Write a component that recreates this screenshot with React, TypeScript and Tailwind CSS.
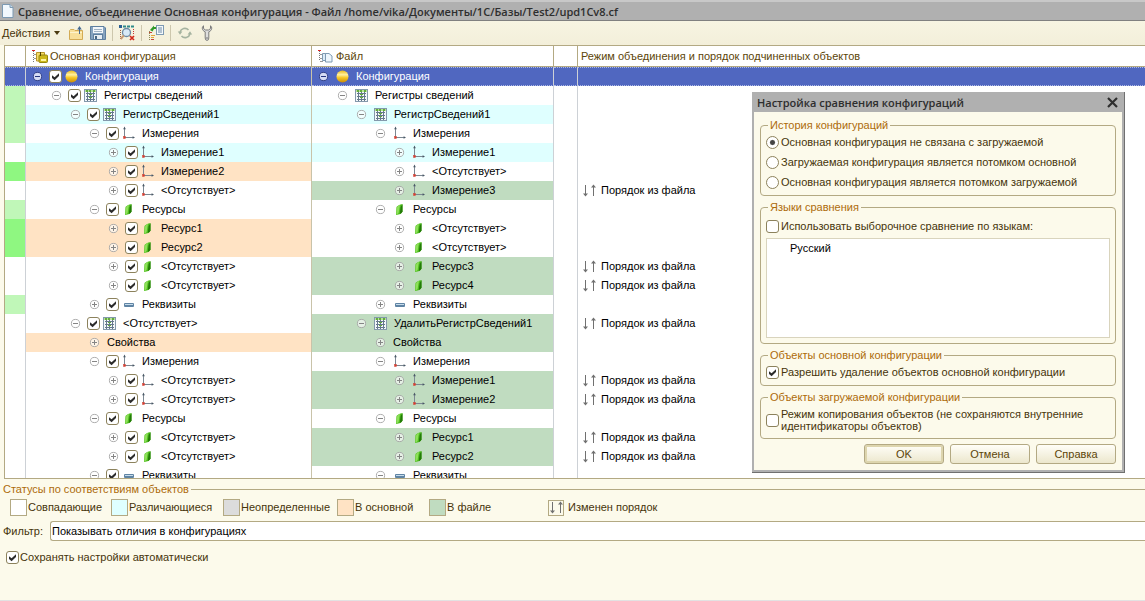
import { useState } from 'react'
import type { ReactNode } from 'react'

type IconKind = 'config' | 'register' | 'axes' | 'resource' | 'attribute' | 'none'
type Tone = 'plain' | 'diff' | 'main' | 'file'

interface Side {
  text: string
  tone: Tone
}

interface Row {
  level: number
  icon: IconKind
  open: boolean
  left: Side
  right: Side
  mark?: 'light' | 'strong'
  order?: boolean
}

const row = (
  level: number,
  icon: IconKind,
  open: boolean,
  left: string,
  leftTone: Tone,
  right: string,
  rightTone: Tone,
  extra: Partial<Row> = {}
): Row => ({
  level,
  icon,
  open,
  left: { text: left, tone: leftTone },
  right: { text: right, tone: rightTone },
  ...extra,
})

const MISSING = '<Отсутствует>'

const rows: Row[] = [
  row(0, 'config', true, 'Конфигурация', 'plain', 'Конфигурация', 'plain'),
  row(1, 'register', true, 'Регистры сведений', 'plain', 'Регистры сведений', 'plain', { mark: 'light' }),
  row(2, 'register', true, 'РегистрСведений1', 'diff', 'РегистрСведений1', 'diff', { mark: 'light' }),
  row(3, 'axes', true, 'Измерения', 'plain', 'Измерения', 'plain', { mark: 'light' }),
  row(4, 'axes', false, 'Измерение1', 'diff', 'Измерение1', 'diff'),
  row(4, 'axes', false, 'Измерение2', 'main', MISSING, 'plain', { mark: 'strong' }),
  row(4, 'axes', false, MISSING, 'plain', 'Измерение3', 'file', { order: true }),
  row(3, 'resource', true, 'Ресурсы', 'plain', 'Ресурсы', 'plain', { mark: 'light' }),
  row(4, 'resource', false, 'Ресурс1', 'main', MISSING, 'plain', { mark: 'strong' }),
  row(4, 'resource', false, 'Ресурс2', 'main', MISSING, 'plain', { mark: 'strong' }),
  row(4, 'resource', false, MISSING, 'plain', 'Ресурс3', 'file', { order: true }),
  row(4, 'resource', false, MISSING, 'plain', 'Ресурс4', 'file', { order: true }),
  row(3, 'attribute', false, 'Реквизиты', 'plain', 'Реквизиты', 'plain', { mark: 'light' }),
  row(2, 'register', true, MISSING, 'plain', 'УдалитьРегистрСведений1', 'file', { order: true }),
  row(3, 'none', false, 'Свойства', 'main', 'Свойства', 'file'),
  row(3, 'axes', true, 'Измерения', 'plain', 'Измерения', 'plain'),
  row(4, 'axes', false, MISSING, 'plain', 'Измерение1', 'file', { order: true }),
  row(4, 'axes', false, MISSING, 'plain', 'Измерение2', 'file', { order: true }),
  row(3, 'resource', true, 'Ресурсы', 'plain', 'Ресурсы', 'plain'),
  row(4, 'resource', false, MISSING, 'plain', 'Ресурс1', 'file', { order: true }),
  row(4, 'resource', false, MISSING, 'plain', 'Ресурс2', 'file', { order: true }),
  row(3, 'attribute', true, 'Реквизиты', 'plain', 'Реквизиты', 'plain'),
]

const toneClass: Record<Tone, string> = {
  plain: '',
  diff: 'bg-[#dfffff]',
  main: 'bg-[#ffe3c4]',
  file: 'bg-[#c0dcc0]',
}

const markClass = {
  light: 'bg-[#c0f7b8]',
  strong: 'bg-[#8ff781]',
}

const levelPad = ['pl-[7px]', 'pl-[26px]', 'pl-[45px]', 'pl-[64px]', 'pl-[83px]']

const statuses = [
  { text: 'Совпадающие', color: 'bg-white' },
  { text: 'Различающиеся', color: 'bg-[#dfffff]' },
  { text: 'Неопределенные', color: 'bg-[#dcdcdc]' },
  { text: 'В основной', color: 'bg-[#ffe3c4]' },
  { text: 'В файле', color: 'bg-[#c0dcc0]' },
]

function CheckBox({ defaultChecked = false, label, id }: { defaultChecked?: boolean; label?: string; id?: string }) {
  return (
    <span className="grid size-[13px] shrink-0">
      <input
        id={id}
        type="checkbox"
        defaultChecked={defaultChecked}
        aria-label={label}
        className="peer col-start-1 row-start-1 size-[13px] appearance-none rounded-[3px] border border-[#8c825c] bg-white"
      />
      <svg
        viewBox="0 0 13 13"
        className="pointer-events-none invisible col-start-1 row-start-1 size-[13px] peer-checked:visible"
      >
        <path d="M3 5.2 L5.6 7.2 L10 3.2 V6 L5.6 10.3 L3 8 Z" fill="#2c2c2c" />
      </svg>
    </span>
  )
}

function Expander({ open, selected }: { open: boolean; selected: boolean }) {
  return (
    <button type="button" aria-label={open ? 'Свернуть' : 'Развернуть'} className="size-[9px] shrink-0">
      <svg viewBox="0 0 9 9" className="size-[9px] overflow-visible">
        <circle
          cx="4.5"
          cy="4.5"
          r="4.1"
          fill={selected ? '#d5dcf5' : '#fff'}
          fillOpacity={selected ? 1 : 0.6}
          stroke={selected ? '#2b3a80' : '#a4a4a4'}
          strokeWidth="0.9"
        />
        <path d={open ? 'M2 4.5 H7' : 'M2 4.5 H7 M4.5 2 V7'} stroke={selected ? '#25357f' : '#858585'} strokeWidth="1" />
      </svg>
    </button>
  )
}

function TreeIcon({ kind }: { kind: IconKind }) {
  if (kind === 'config') {
    return (
      <svg viewBox="0 0 13 13" className="size-[13px] shrink-0">
        <defs>
          <linearGradient id="ball" x1="0" y1="0" x2="0" y2="1">
            <stop offset="0" stopColor="#e8b818" />
            <stop offset="0.35" stopColor="#fff0a0" />
            <stop offset="0.6" stopColor="#f6c624" />
            <stop offset="1" stopColor="#c98a08" />
          </linearGradient>
        </defs>
        <circle cx="6.5" cy="6.5" r="6" fill="url(#ball)" />
      </svg>
    )
  }
  if (kind === 'register') {
    return (
      <svg viewBox="0 0 13 13" className="size-[13px] shrink-0">
        <rect x="0.5" y="0.5" width="12" height="12" fill="#f4f8fb" stroke="#8499ac" />
        <rect x="1" y="1" width="11" height="2" fill="#b9e29a" />
        <path d="M2 1 h2 v2 h-2z M5 1 h2 v2 h-2z M9 1 h2 v2 h-2z" fill="#62ab3c" />
        <path d="M3.5 3 V12 M6.5 3 V12 M9.5 3 V12" stroke="#66798c" strokeWidth="1" />
        <path d="M2 4.5 H11 M2 7.5 H11 M2 10.5 H11" stroke="#66798c" strokeWidth="1" />
        <path d="M5 5 h3 v1 h-3z M5 8 h3 v1 h-3z" fill="#62ab3c" />
      </svg>
    )
  }
  if (kind === 'axes') {
    return (
      <svg viewBox="0 0 13 13" className="size-[13px] shrink-0 overflow-visible">
        <path d="M2.5 1 V10.5 H12" stroke="#7b8792" fill="none" />
        <path d="M2.5 -0.5 L3.8 2.2 H1.2 Z M13 10.5 L10.6 9.2 V11.8 Z" fill="#4a5866" />
        <rect x="1.5" y="9.5" width="2" height="2" fill="#e2382a" stroke="#c9483c" strokeWidth="0.5" />
      </svg>
    )
  }
  if (kind === 'resource') {
    return (
      <svg viewBox="0 0 13 13" className="size-[13px] shrink-0">
        <path d="M3.5 4.5 Q5 1.5 9.5 1 V8.5 Q8.5 11.5 3 12 Z" fill="#4fbf1e" />
        <path d="M3.8 4.8 Q4.8 2.6 7 1.8 L5.6 10 Q4.5 11.2 3.4 11.6 Z" fill="#8ee05a" />
        <path d="M7.6 4 L6.8 11 Q9 10 9.5 8.5 V1.2 Z" fill="#237a08" />
      </svg>
    )
  }
  if (kind === 'attribute') {
    return (
      <svg viewBox="0 0 13 13" className="size-[13px] shrink-0">
        <rect x="2" y="5" width="10" height="4" rx="1" fill="#5f84a4" />
        <rect x="3" y="6" width="8" height="1" fill="#c6dcec" />
      </svg>
    )
  }
  return null
}

function OrderIcon() {
  return (
    <svg viewBox="0 0 13 13" className="size-[13px] shrink-0">
      <path d="M2.5 1 V12 M10.5 1 V12" stroke="#707070" />
      <path d="M0 9.5 H5 L2.5 12.5 Z M8 3.5 H13 L10.5 0.5 Z" fill="#707070" />
    </svg>
  )
}

function TreeCell({ row, side, selected, checkable }: { row: Row; side: Side; selected: boolean; checkable: boolean }) {
  const hasIcon = row.icon !== 'none'
  return (
    <div className={`flex items-center ${levelPad[row.level]}`}>
      <Expander open={row.open} selected={selected} />
      {checkable && hasIcon && (
        <span className="ml-[7px] mr-[-5px] flex">
          <CheckBox defaultChecked label={side.text} />
        </span>
      )}
      <span className="ml-2 flex items-center gap-[7px] whitespace-nowrap">
        {hasIcon && <TreeIcon kind={row.icon} />}
        {side.text}
      </span>
    </div>
  )
}

function ConfigTable() {
  const [current, setCurrent] = useState(0)
  const head = 'h-[21px] border-b border-r border-[#b3a983] p-0 text-left font-normal'

  return (
    <table className="w-full table-fixed border-separate border-spacing-0 text-black">
      <colgroup>
        <col className="w-[21px]" />
        <col className="w-[286px]" />
        <col className="w-[242px]" />
        <col className="w-6" />
        <col />
      </colgroup>
      <thead className="text-[#5c4508]">
        <tr>
          <th className={head} />
          <th className={head}>
            <span className="flex items-center gap-[2px] pl-[6px]">
              <svg viewBox="0 0 16 14" className="h-[14px] w-4">
                <path d="M1.5 2 V13" stroke="#777" strokeDasharray="1 1" />
                <path d="M2 5.5 H4 M2 9.5 H4" stroke="#999" />
                <path d="M0 1.5 H3" stroke="#d22" />
                <path d="M4.5 3.5 H12.5 V12 H4.5 Z" fill="#f3dc6a" stroke="#b8962a" />
                <rect x="7" y="6" width="8.5" height="7.5" rx="1" fill="#cdb91c" stroke="#978610" />
                <path d="M8.5 3 V7" stroke="#554400" />
                <rect x="9" y="10" width="5" height="2" fill="#fff4a0" />
              </svg>
              Основная конфигурация
            </span>
          </th>
          <th className={head}>
            <span className="flex items-center gap-[2px] pl-[6px]">
              <svg viewBox="0 0 16 14" className="h-[14px] w-4">
                <path d="M1.5 2 V12" stroke="#777" strokeDasharray="1 1" />
                <path d="M2 5.5 H5 M2 9.5 H5 M2 12.5 H5" stroke="#999" />
                <path d="M0 1.5 H3" stroke="#d22" />
                <path d="M4.5 4.5 H8 V11.5 H4.5 Z" fill="#dcecf8" stroke="#7f9bb3" />
                <path d="M7.5 4.5 H11 L14 7 V13 H7.5 Z" fill="#eef6fc" stroke="#7f9bb3" />
              </svg>
              Файл
            </span>
          </th>
          <th className={head} />
          <th className={`${head} border-r-0 pl-[3px]`}>Режим объединения и порядок подчиненных объектов</th>
        </tr>
      </thead>
      <tbody>
        {rows.map((r, i) => {
          const selected = i === current
          const cell = selected
            ? 'h-[19px] border-y border-y-[#aeb9e6] bg-[#5067c0] p-0 text-white [border-block-style:dotted]'
            : 'h-[19px] p-0'
          return (
            <tr key={i} onClick={() => setCurrent(i)}>
              <td className={`${cell} border-r border-r-[#cdd1d6] ${r.mark ? markClass[r.mark] : ''}`} />
              <td className={`${cell} border-r border-r-[#c9c3a9] ${toneClass[r.left.tone]}`}>
                <TreeCell row={r} side={r.left} selected={selected} checkable />
              </td>
              <td className={`${cell} border-r border-r-[#cdd1d6] ${toneClass[r.right.tone]}`}>
                <TreeCell row={r} side={r.right} selected={selected} checkable={false} />
              </td>
              <td className={`${cell} border-r border-r-[#cdd1d6]`} />
              <td className={cell}>
                {r.order && (
                  <span className="flex items-center gap-[5px] pl-[5px]">
                    <OrderIcon />
                    Порядок из файла
                  </span>
                )}
              </td>
            </tr>
          )
        })}
      </tbody>
    </table>
  )
}

function ToolButton({ label, children }: { label: string; children: ReactNode }) {
  return (
    <button type="button" aria-label={label} className="flex w-[22px] justify-center">
      <svg viewBox="0 0 16 16" className="size-4">
        {children}
      </svg>
    </button>
  )
}

function Separator() {
  return <span className="mx-[3px] h-4 w-px bg-[#cdc7ad]" />
}

function Toolbar() {
  return (
    <div className="flex h-6 items-center bg-linear-to-b from-[#f7f4e2] to-[#f3efda] pl-[2px]">
      <button type="button" className="mr-[5px] flex items-center gap-1">
        Действия
        <svg viewBox="0 0 6 4" className="h-1 w-[6px]">
          <path d="M0 0 H6 L3 4 Z" fill="#4a3a10" />
        </svg>
      </button>
      <ToolButton label="Открыть">
        <path d="M1.5 5.5 L2.5 4.5 H6 L7 5.5 H14.5 V14.5 H1.5 Z" fill="#f8e09a" stroke="#d3ab55" />
        <path d="M2 7.5 H14" stroke="#fdf3cc" />
        <path d="M11.5 9 V2" stroke="#44698f" />
        <path d="M9.2 4.5 L11.5 1 L13.8 4.5 Z" fill="#44698f" />
      </ToolButton>
      <ToolButton label="Сохранить">
        <path d="M0.5 1.5 H14 L15.5 3 V14.5 H0.5 Z" fill="#86a3bf" stroke="#5e7f9f" />
        <rect x="3" y="2" width="10" height="6" fill="#f2f6fa" />
        <path d="M4 4.5 H12 M4 6.5 H12" stroke="#9fb2c4" />
        <rect x="3.5" y="9.5" width="9" height="5" fill="#e6edf3" stroke="#5e7f9f" />
        <rect x="5" y="11" width="2" height="3" fill="#456583" />
      </ToolButton>
      <Separator />
      <ToolButton label="Сравнить">
        <path d="M4 1.5 H16" stroke="#2f8a8a" strokeWidth="2" strokeDasharray="3 1" />
        <path d="M1.5 5 V14" stroke="#a05a40" strokeDasharray="1 1" />
        <rect x="0" y="0" width="3" height="3" fill="#2b5f93" />
        <path d="M14.5 4 V9" stroke="#c33" strokeDasharray="1 1" />
        <circle cx="7.5" cy="7.5" r="4" fill="#d8e9f7" stroke="#6d89a3" strokeWidth="1.3" />
        <path d="M4.8 10.4 L1.8 14" stroke="#c99a72" strokeWidth="2" />
        <path d="M11 11 L15 15 M15 11 L11 15" stroke="#d22a1c" strokeWidth="1.7" />
      </ToolButton>
      <Separator />
      <ToolButton label="Отчет">
        <path d="M1.5 6 V16" stroke="#8d8a55" strokeDasharray="1 1" />
        <path d="M1 7.5 H4 M3 14.5 H6" stroke="#c4453a" />
        <path d="M3 10.5 H7 M3 12.5 H6" stroke="#e2a43a" />
        <path d="M2 5 L6 0.5 V2 H8.5 V4 H6 L4.5 6.5 Z" fill="#2f9a2a" />
        <rect x="8.5" y="0.5" width="7" height="9" fill="#f4f8fb" stroke="#7f9bb3" />
        <path d="M10 3 H14 M10 5 H14 M10 7 H14" stroke="#5d7f9d" strokeWidth="0.9" />
      </ToolButton>
      <Separator />
      <ToolButton label="Обновить">
        <path d="M3 7 A5 5 0 0 1 11.5 5" fill="none" stroke="#a5b3a0" strokeWidth="1.6" />
        <path d="M13 9 A5 5 0 0 1 4.5 11" fill="none" stroke="#a5b3a0" strokeWidth="1.6" />
        <path d="M0.8 6.5 H5.4 L3 9.8 Z M10.6 9.5 H15.2 L13 6.2 Z" fill="#a5b3a0" />
      </ToolButton>
      <ToolButton label="Настройка">
        <path
          d="M4.5 0.8 C2.6 2 2.8 5.6 6.2 6.8 V13 Q6.2 15.4 8 15.4 Q9.8 15.4 9.8 13 V6.8 C13.2 5.6 13.4 2 11.5 0.8 V3.6 L9.5 5 H6.5 L4.5 3.6 Z"
          fill="#dedede"
          stroke="#7c7c7c"
        />
        <circle cx="8" cy="13" r="0.8" fill="#666" />
      </ToolButton>
    </div>
  )
}

function Group({ title, className, children }: { title: string; className: string; children: ReactNode }) {
  return (
    <fieldset className={`rounded-[4px] border border-[#b3a983] px-[5px] ${className}`}>
      <legend className="ml-[2px] px-[2px] leading-3 text-[#ad6b0a]">{title}</legend>
      {children}
    </fieldset>
  )
}

const history = [
  'Основная конфигурация не связана с загружаемой',
  'Загружаемая конфигурация является потомком основной',
  'Основная конфигурация является потомком загружаемой',
]

const dialogButton =
  'h-5 w-20 rounded-[3px] border border-[#b3a983] bg-linear-to-b from-[#fffef8] to-[#ece7cd] text-[#5c4508]'

function SettingsDialog() {
  return (
    <div
      role="dialog"
      aria-labelledby="dialog-title"
      className="absolute right-5 top-[92px] w-[373px] border-b border-r border-[#707070] bg-[#fcfaeb]"
    >
      <div className="border-x-2 border-b-2 border-[#b0b0b0]">
        <div className="flex h-5 items-center justify-between bg-[#b0b0b0] pl-[3px] pr-1">
          <h2 id="dialog-title" className="font-['Open_Sans',sans-serif] text-[11px] font-semibold text-[#2e2e2e]">
            Настройка сравнения конфигураций
          </h2>
          <button type="button" aria-label="Закрыть">
            <svg viewBox="0 0 11 11" className="size-[11px]">
              <path d="M1 1 L10 10 M10 1 L1 10" stroke="#2e2e2e" strokeWidth="2.2" />
            </svg>
          </button>
        </div>
        <form className="flex flex-col gap-[5px] px-[6px] pb-[6px] pt-[7px]" onSubmit={(e) => e.preventDefault()}>
          <Group title="История конфигураций" className="pb-[3px] pt-px">
            {history.map((text, i) => (
              <label key={text} className="flex h-5 items-center gap-[2px]">
                <input
                  type="radio"
                  name="history"
                  defaultChecked={i === 0}
                  className="size-[13px] appearance-none rounded-full border border-[#8c825c] bg-white checked:bg-radial checked:from-[#444] checked:from-25% checked:to-white checked:to-40%"
                />
                {text}
              </label>
            ))}
          </Group>
          <Group title="Языки сравнения" className="pb-[5px]">
            <label className="mt-[3px] flex h-5 items-center gap-[2px]">
              <CheckBox />
              Использовать выборочное сравнение по языкам:
            </label>
            <ul className="mt-[2px] h-[100px] border border-[#d9d4bd] bg-white pl-[23px] pt-px text-black">
              <li className="leading-4">Русский</li>
            </ul>
          </Group>
          <Group title="Объекты основной конфигурации" className="pb-[3px]">
            <label className="mt-px flex h-5 items-center gap-[2px]">
              <CheckBox defaultChecked />
              Разрешить удаление объектов основной конфигурации
            </label>
          </Group>
          <Group title="Объекты загружаемой конфигурации" className="pb-[6px]">
            <label className="mt-[5px] flex items-center gap-[2px] leading-3">
              <CheckBox />
              Режим копирования объектов (не сохраняются внутренние идентификаторы объектов)
            </label>
          </Group>
          <div className="flex justify-end gap-[6px]">
            <button type="submit" className={`${dialogButton} inset-ring-2 inset-ring-[#ddd5ae]`}>
              OK
            </button>
            <button type="button" className={dialogButton}>
              Отмена
            </button>
            <button type="button" className={dialogButton}>
              Справка
            </button>
          </div>
        </form>
      </div>
    </div>
  )
}

export default function App() {
  return (
    <div className="relative flex h-screen flex-col overflow-hidden border-b border-[#e2e2e2] bg-[#fcfaeb] font-['Liberation_Sans',Arial,sans-serif] text-[11px] leading-[13px] text-[#46340a]">
      <header className="flex h-[21px] items-center gap-1 border-b border-t-2 border-b-[#808080] border-t-[#c8c8c8] bg-[#b0b0b0] pl-px">
        <svg viewBox="0 0 13 14" className="h-[14px] w-[13px]">
          <path d="M1.5 0.5 H9 L12 3.5 V13.5 H1.5 Z" fill="#f2f8fd" stroke="#7d9ab3" />
          <path d="M9 0.5 V3.5 H12" fill="#c5dced" stroke="#7d9ab3" />
        </svg>
        <h1 className="font-['Open_Sans',sans-serif] text-[11px] font-semibold text-[#2e2e2e]">
          Сравнение, объединение Основная конфигурация - Файл /home/vika/Документы/1С/Базы/Test2/upd1Cv8.cf
        </h1>
      </header>
      <Toolbar />
      <main className="ml-1 min-h-0 flex-1 overflow-hidden border-y border-l border-[#b3a983] bg-white">
        <ConfigTable />
      </main>
      <footer className="pb-9">
        <section>
          <h2 className="flex items-center gap-[2px] pl-[3px] pt-1 text-[#ad6b0a] after:h-px after:flex-1 after:bg-[#b3a983]">
            Статусы по соответствиям объектов
          </h2>
          <ul className="mt-[3px] grid grid-cols-[101px_112px_114px_92px_119px_auto] pl-[10px]">
            {statuses.map((s) => (
              <li key={s.text} className="flex items-center">
                <span className={`mr-px size-[17px] border border-[#b3a983] ${s.color}`} />
                {s.text}
              </li>
            ))}
            <li className="flex items-center gap-1">
              <span className="flex size-4 items-center justify-center border border-[#b3a983]">
                <OrderIcon />
              </span>
              Изменен порядок
            </li>
          </ul>
        </section>
        <div className="mt-[5px] flex items-center">
          <label htmlFor="filter" className="w-[50px] pl-[3px]">
            Фильтр:
          </label>
          <input
            id="filter"
            type="text"
            defaultValue="Показывать отличия в конфигурациях"
            className="h-5 flex-1 rounded-l-[3px] border border-r-0 border-[#b3a983] bg-white px-px text-black"
          />
        </div>
        <label className="ml-[6px] mt-[10px] flex items-center gap-px">
          <CheckBox defaultChecked />
          Сохранять настройки автоматически
        </label>
      </footer>
      <SettingsDialog />
    </div>
  )
}
